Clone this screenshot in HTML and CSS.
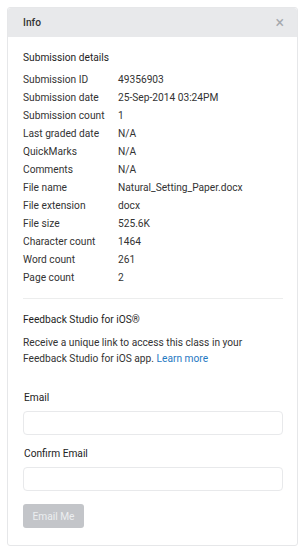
FILE: index.html
```html
<!DOCTYPE html>
<html lang="en">
<head>
    <meta charset="UTF-8">
    <title>Info</title>
    <link rel="stylesheet" href="styles.css">
</head>
<body>
    <div class="panel">
        <div class="panel-header">
            <span class="panel-title">Info</span>
            <span class="close">&times;</span>
        </div>
        <div class="panel-body">
            <h2>Submission details</h2>
            <table class="details">
                <tr><td>Submission ID</td><td>49356903</td></tr>
                <tr><td>Submission date</td><td>25-Sep-2014 03:24PM</td></tr>
                <tr><td>Submission count</td><td>1</td></tr>
                <tr><td>Last graded date</td><td>N/A</td></tr>
                <tr><td>QuickMarks</td><td>N/A</td></tr>
                <tr><td>Comments</td><td>N/A</td></tr>
                <tr><td>File name</td><td>Natural_Setting_Paper.docx</td></tr>
                <tr><td>File extension</td><td>docx</td></tr>
                <tr><td>File size</td><td>525.6K</td></tr>
                <tr><td>Character count</td><td>1464</td></tr>
                <tr><td>Word count</td><td>261</td></tr>
                <tr><td>Page count</td><td>2</td></tr>
            </table>

            <hr>

            <h2>Feedback Studio for iOS®</h2>
            <p class="intro">Receive a unique link to access this class in your Feedback Studio for iOS app.&nbsp;<a href="#">Learn more</a></p>

            <div class="form">
                <label for="email">Email</label>
                <input type="text" id="email">
                <label for="confirm">Confirm Email</label>
                <input type="text" id="confirm">
                <button disabled>Email Me</button>
            </div>
        </div>
    </div>
</body>
</html>
```
FILE: styles.css
```css
body {
    margin: 0;
    padding: 7px 8px 9px 7px;
    background: #fff;
    font-family: Roboto, "Liberation Sans", sans-serif;
    color: #333;
    font-size: 10.2px;
}
.panel {
    border: 1px solid #e6e7e9;
    border-radius: 3px;
    background: #fff;
    height: 539px;
    box-sizing: border-box;
}
.panel-header {
    display: flex;
    justify-content: space-between;
    align-items: center;
    height: 29px;
    padding: 0 13px 0 15px;
    background: #e8e9eb;
    border-radius: 3px 3px 0 0;
}
.panel-title {
    font-weight: 500;
    color: #333;
}
.close {
    font-size: 16px;
    color: #a5a8ad;
    line-height: 1;
}
.panel-body {
    padding: 13px 14px 0 15px;
}
h2 {
    margin: 0;
    font-size: 10.2px;
    font-weight: 400;
    color: #1e1e1e;
    line-height: 16px;
}
.details {
    border-collapse: collapse;
    margin-top: 5px;
}
.details td {
    padding: 0;
    height: 18px;
    line-height: 18px;
    vertical-align: middle;
}
.details td:first-child {
    width: 95px;
}
hr {
    border: none;
    border-top: 1px solid #eceded;
    margin: 11px 0 13px;
}
.intro {
    margin: 7px 0 0;
    line-height: 16px;
    color: #333;
}
.intro a {
    color: #1f79c2;
    text-decoration: none;
}
.form {
    display: flex;
    flex-direction: column;
    align-items: flex-start;
    padding-top: 23px;
}
label {
    color: #222;
    line-height: 16px;
    margin-left: 1px;
}
input {
    box-sizing: border-box;
    width: 100%;
    height: 24px;
    margin: 5px 0 11px;
    border: 1px solid #e8e9eb;
    border-radius: 4px;
    background: #fff;
}
button {
    margin-top: 2px;
    width: 61px;
    height: 24px;
    border: none;
    border-radius: 3px;
    background: #c3c5c9;
    color: #eceef0;
    font-family: Roboto, "Liberation Sans", sans-serif;
    font-size: 10.2px;
    padding: 0;
}
```
